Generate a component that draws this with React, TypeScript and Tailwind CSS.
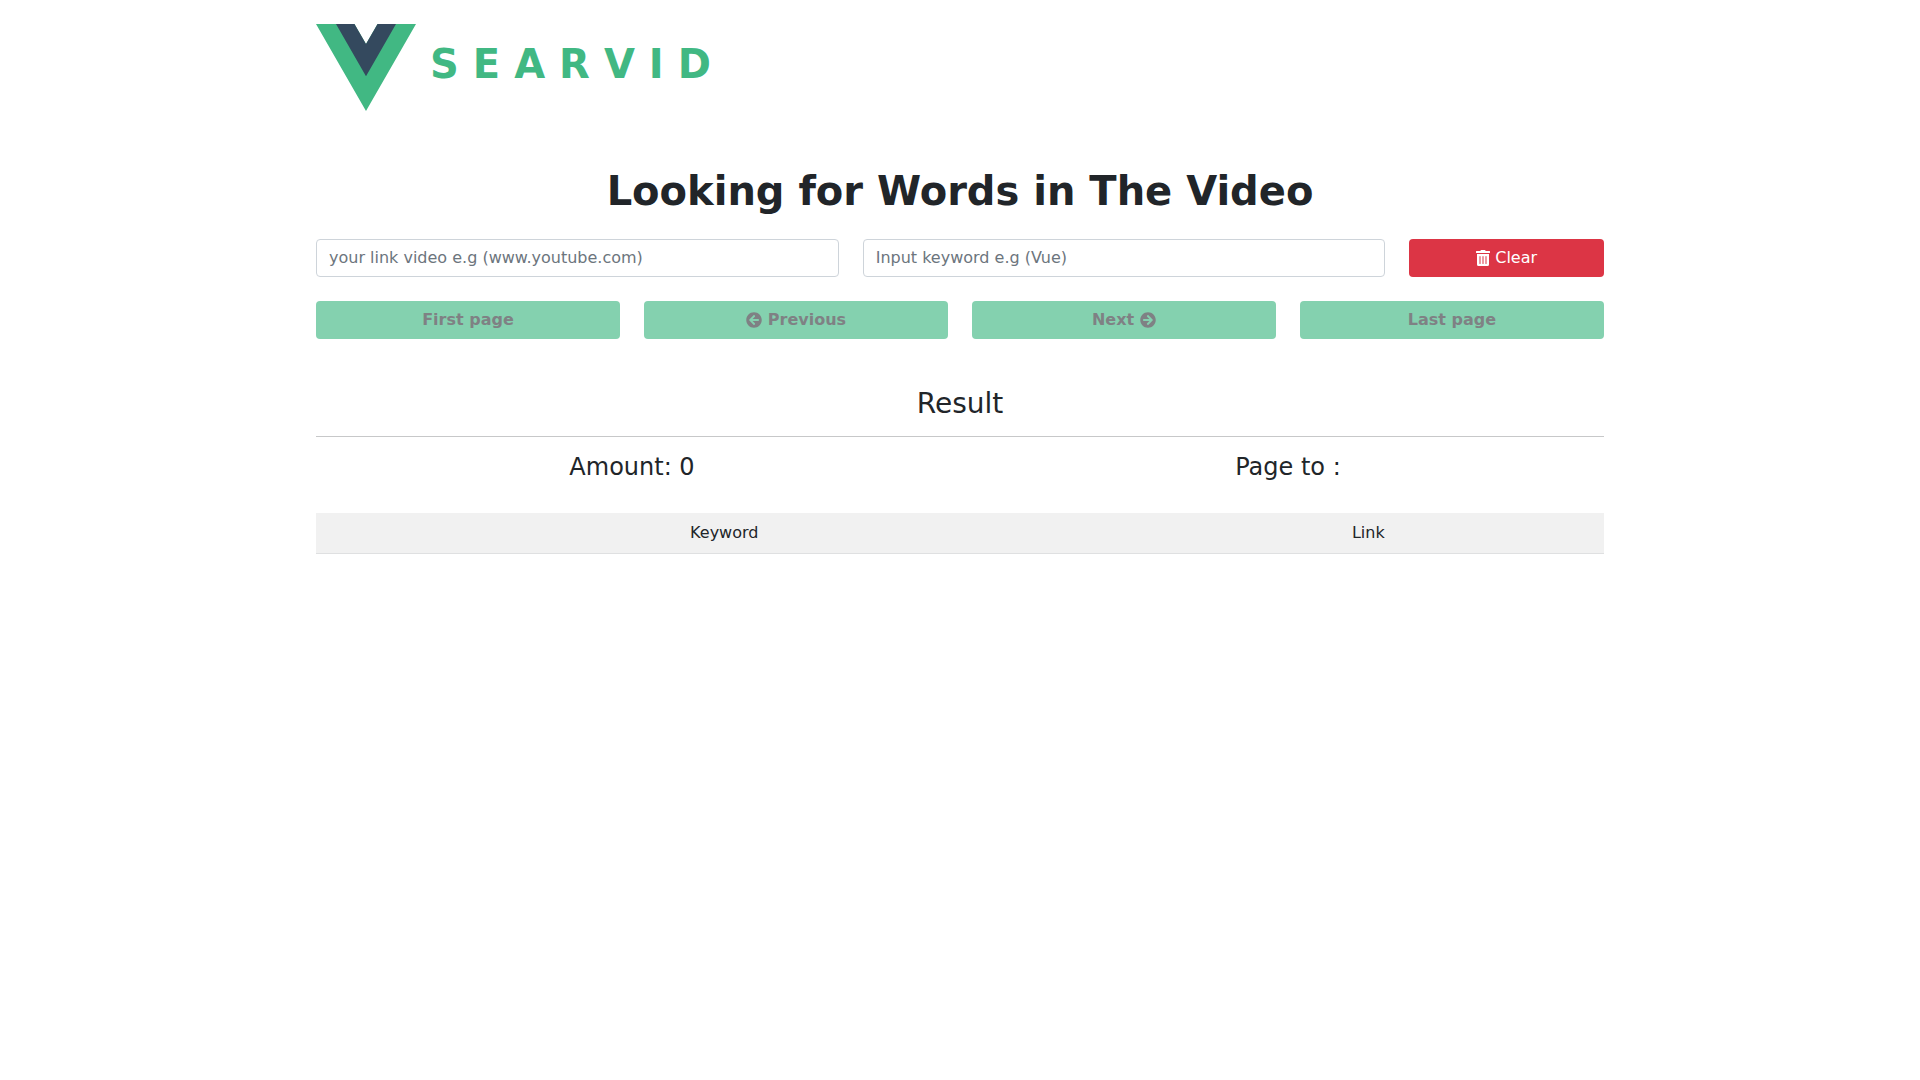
import React, { useState } from "react";
import { FaArrowCircleLeft, FaArrowCircleRight, FaTrashAlt } from "react-icons/fa";

const fieldClass =
  "col-span-5 min-w-0 rounded border border-[#ced4da] bg-white px-3 py-1.5 text-base leading-6 text-[#212529] placeholder:text-[#6c757d] placeholder:opacity-100";

function Logo() {
  return (
    <svg viewBox="0 0 261.76 226.69" preserveAspectRatio="none" className="h-[87px] w-[100px]" aria-hidden="true">
      <path fill="#41b883" d="M161.096.001l-30.225 52.351L100.647.001H-.005l130.877 226.688L261.749.001z" />
      <path fill="#34495e" d="M161.096.001l-30.225 52.351L100.647.001H52.346l78.526 136.01L209.398.001z" />
    </svg>
  );
}

function PageButton({ children }: { children: React.ReactNode }) {
  return (
    <button
      type="button"
      disabled
      className="flex h-[38px] items-center justify-center gap-1.5 rounded bg-[#84d1af] text-base font-bold text-[#7f8184]"
    >
      {children}
    </button>
  );
}

export default function App() {
  const [link, setLink] = useState("");
  const [keyword, setKeyword] = useState("");

  return (
    <div className="mx-auto max-w-[1320px] px-4 pt-6 font-['DejaVu_Sans',sans-serif] text-base text-[#212529]">
      <header className="flex items-start gap-3.5">
        <Logo />
        <span className="pt-4 text-[40px] leading-[48px] font-bold tracking-[14px] text-[#41b883]">SEARVID</span>
      </header>

      <main>
        <h1 className="mt-14 text-center text-[40px] leading-[48px] font-bold">Looking for Words in The Video</h1>

        <div className="mt-6 grid grid-cols-12 gap-6">
          <input
            type="text"
            aria-label="Video link"
            placeholder="your link video e.g (www.youtube.com)"
            value={link}
            onChange={(e) => setLink(e.target.value)}
            className={fieldClass}
          />
          <input
            type="text"
            aria-label="Keyword"
            placeholder="Input keyword e.g (Vue)"
            value={keyword}
            onChange={(e) => setKeyword(e.target.value)}
            className={fieldClass}
          />
          <button
            type="button"
            onClick={() => {
              setLink("");
              setKeyword("");
            }}
            className="col-span-2 flex h-[38px] items-center justify-center gap-[5px] rounded bg-[#dc3545] text-base text-white"
          >
            <FaTrashAlt className="h-4 w-3.5" />
            <span>Clear</span>
          </button>
        </div>

        <div className="mt-6 grid grid-cols-4 gap-6">
          <PageButton>First page</PageButton>
          <PageButton>
            <FaArrowCircleLeft />
            <span>Previous</span>
          </PageButton>
          <PageButton>
            <span>Next</span>
            <FaArrowCircleRight />
          </PageButton>
          <PageButton>Last page</PageButton>
        </div>

        <section className="mt-12">
          <h2 className="text-center text-[28px] leading-[34px]">Result</h2>
          <hr className="mt-[15px] border-t border-[#c7c8c9]" />
          <div className="mt-4 grid grid-cols-2 gap-6 text-center text-2xl leading-[28px]">
            <p>Amount: 0</p>
            <p>Page to :</p>
          </div>
          <table className="mt-8 w-full table-fixed border-collapse">
            <thead>
              <tr className="border-b border-[#dfe0e1] bg-[#f1f1f1]">
                <th scope="col" className="w-[63.4%] p-2 text-center font-normal">
                  Keyword
                </th>
                <th scope="col" className="p-2 text-center font-normal">
                  Link
                </th>
              </tr>
            </thead>
          </table>
        </section>
      </main>
    </div>
  );
}
